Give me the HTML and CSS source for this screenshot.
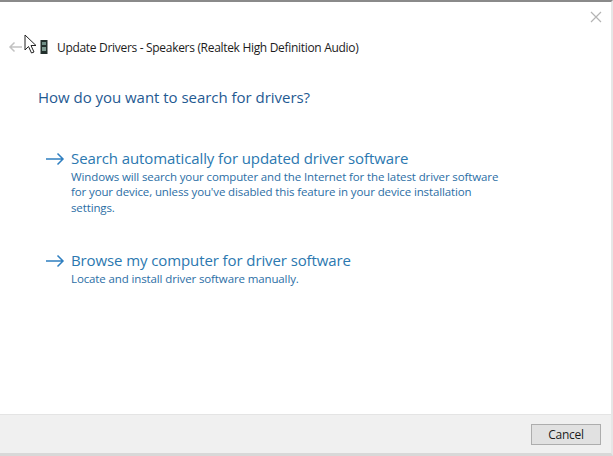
FILE: index.html
```html
<!DOCTYPE html>
<html lang="en">
    <head>
        <meta charset="utf-8" />
        <title>Update Drivers</title>
        <link rel="stylesheet" href="styles.css">
    </head>
    <body>
        <div class="dialog">
            <div class="caption">
                <svg class="close" width="12" height="12" viewBox="0 0 12 12"><path d="M1 1L11 11M11 1L1 11" stroke="#b4b4b4" stroke-width="1.2" fill="none"/></svg>
            </div>
            <div class="nav">
                <svg class="back" width="15" height="12" viewBox="0 0 15 12"><path d="M14 6H2M6.500 1.500L2 6l4.500 4.500" stroke="#c2c2c2" stroke-width="1.500" fill="none"/></svg>
                <svg class="speaker" width="8" height="14" viewBox="0 0 8 14">
                    <rect x="0.500" y="0" width="7" height="14" fill="#22302c"/>
                    <rect x="2" y="2" width="4" height="3" fill="#6f8f86"/>
                    <rect x="2" y="7" width="4" height="4" fill="#7d9a90"/>
                </svg>
                <span class="nav-title">Update Drivers - Speakers (Realtek High Definition Audio)</span>
            </div>
            <div class="main">
                <h1>How do you want to search for drivers?</h1>
                <div class="command first">
                    <svg class="arrow" width="21" height="14" viewBox="0 0 21 14"><path d="M1 7H18M12.500 1.500L18 7l-5.500 5.500" stroke="#2f7fc0" stroke-width="1.500" fill="none"/></svg>
                    <div class="command-text">
                        <div class="command-title">Search automatically for updated driver software</div>
                        <div class="command-note">Windows will search your computer and the Internet for the latest driver software for your device, unless you've disabled this feature in your device installation settings.</div>
                    </div>
                </div>
                <div class="command second">
                    <svg class="arrow" width="21" height="14" viewBox="0 0 21 14"><path d="M1 7H18M12.500 1.500L18 7l-5.500 5.500" stroke="#2f7fc0" stroke-width="1.500" fill="none"/></svg>
                    <div class="command-text">
                        <div class="command-title">Browse my computer for driver software</div>
                        <div class="command-note">Locate and install driver software manually.</div>
                    </div>
                </div>
            </div>
            <div class="footer">
                <button class="cancel">Cancel</button>
            </div>
        </div>
        <svg class="cursor" width="14" height="20" viewBox="0 0 14 20"><path d="M1 1V16L4.500 12.500L7.500 19L10 18L7 11.500H12Z" fill="#fff" stroke="#222" stroke-width="1"/></svg>
    </body>
</html>
```

FILE: styles.css
```css
* {
    margin: 0;
    padding: 0;
    box-sizing: border-box;
}
html, body {
    width: 613px;
    height: 456px;
    overflow: hidden;
}
body {
    position: relative;
    background-color: #fff;
    font-family: "Open Sans", "Noto Sans", sans-serif;
    color: #1c1c1c;
}
.dialog {
    display: flex;
    flex-direction: column;
    width: 613px;
    height: 456px;
    border-top: 2px solid #8a8a8a;
    border-right: 2px solid #e6e6e6;
    border-bottom: 3px solid #d8d8d8;
}
.caption {
    display: flex;
    justify-content: flex-end;
    height: 28px;
    padding-top: 9px;
    padding-right: 9px;
}
.nav {
    display: flex;
    align-items: center;
    height: 34px;
    padding-left: 8px;
}
.speaker {
    margin-left: 17px;
}
.nav-title {
    margin-left: 9px;
    font-size: 12px;
    letter-spacing: -0.31px;
    white-space: nowrap;
}
.main {
    flex: 1;
    padding-left: 38px;
    padding-top: 22px;
}
h1 {
    font-size: 15px;
    font-weight: 400;
    line-height: 22px;
    letter-spacing: -0.03px;
    color: #1f5a92;
}
.command {
    display: flex;
    margin-left: 7px;
}
.first {
    margin-top: 39px;
}
.second {
    margin-top: 34px;
}
.arrow {
    flex: none;
    margin-top: 5px;
}
.command-text {
    margin-left: 5px;
    width: 430px;
}
.command-title {
    font-size: 15px;
    line-height: 22px;
    letter-spacing: -0.1px;
    color: #2b78b0;
    white-space: nowrap;
}
.command-note {
    font-size: 11.5px;
    line-height: 15.25px;
    letter-spacing: -0.12px;
    color: #2b6ea5;
}
.footer {
    display: flex;
    justify-content: flex-end;
    align-items: center;
    height: 39px;
    padding-right: 10px;
    background-color: #f0f0f0;
    border-top: 1px solid #e4e4e4;
}
.cancel {
    width: 70px;
    height: 21px;
    font-family: inherit;
    font-size: 12px;
    letter-spacing: -0.3px;
    color: #1c1c1c;
    background-color: #e1e1e1;
    border: 1px solid #adadad;
}
.cursor {
    position: absolute;
    left: 24px;
    top: 34px;
}
```
